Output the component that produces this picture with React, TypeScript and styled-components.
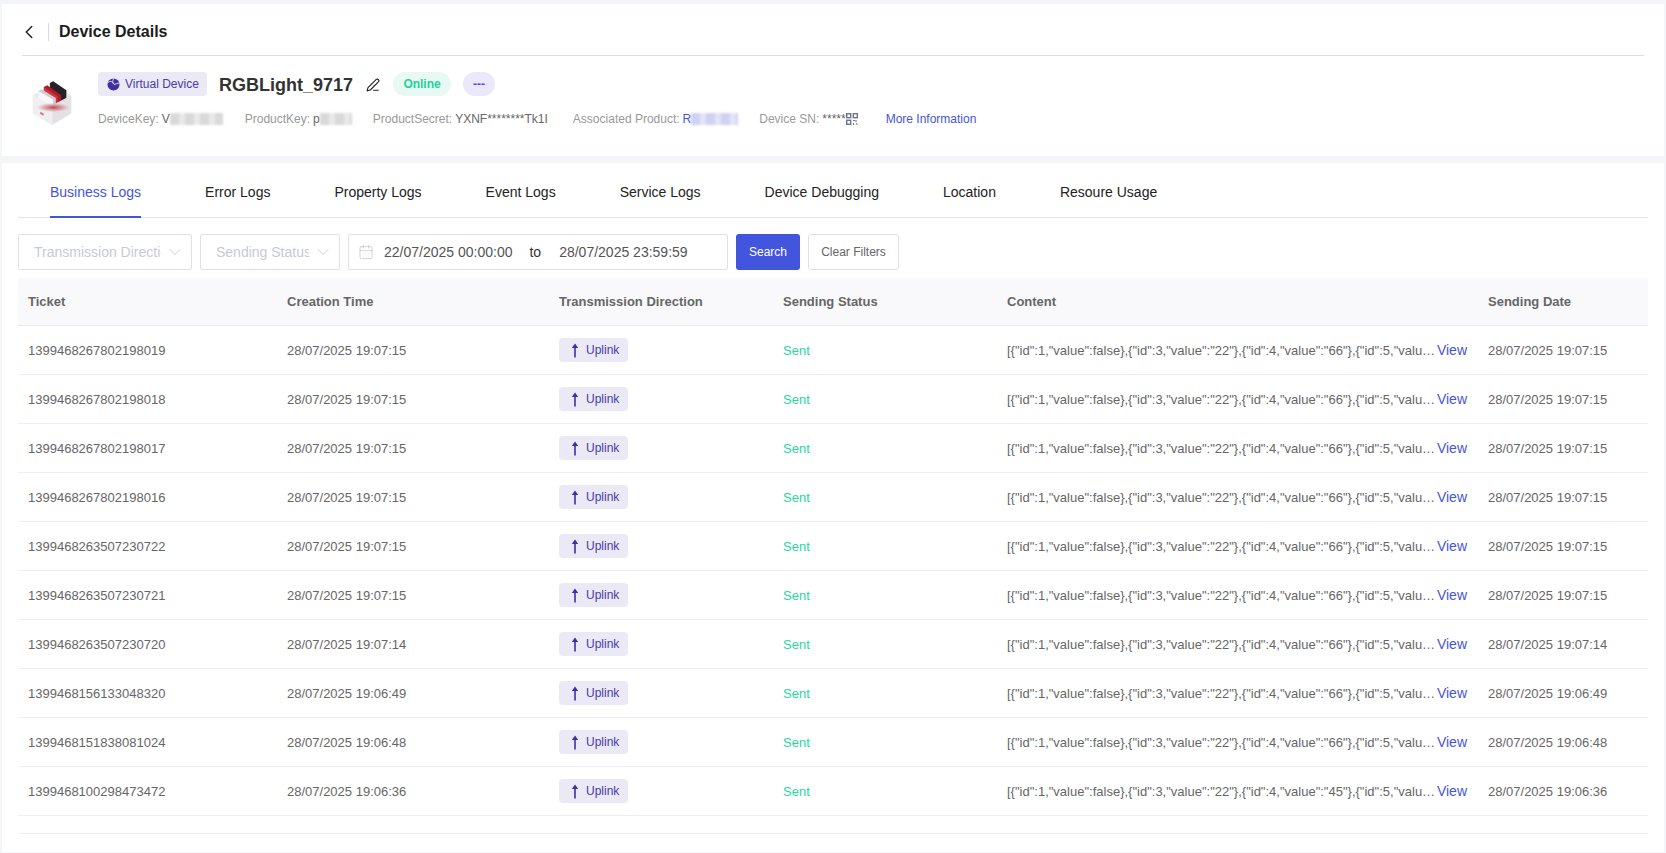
import styled, { createGlobalStyle } from "styled-components";
import { CalendarDays, ChevronDown, ChevronLeft, PenLine } from "lucide-react";

const GlobalStyle = createGlobalStyle`
  html, body {
    margin: 0;
    padding: 0;
    background: #f4f5f9;
    font-family: "Liberation Sans", Arial, sans-serif;
  }
  * {
    box-sizing: border-box;
  }
`;

const Page = styled.div`
  width: 1666px;
  height: 853px;
  padding: 4px 2px 1px;
  display: flex;
  flex-direction: column;
  gap: 7px;
  overflow: hidden;
`;

const HeaderCard = styled.section`
  height: 152px;
  background: #fff;
  padding: 0 20px;
`;

const TitleBar = styled.div`
  height: 52px;
  padding-top: 4px;
  display: flex;
  align-items: center;
  border-bottom: 1px solid #dcdcec;
  color: #1f1f1f;
  svg {
    margin-left: -4px;
  }
`;

const TitleDivider = styled.span`
  width: 1px;
  height: 18px;
  margin: 0 10px 0 8px;
  background: #d6d8ea;
`;

const PageTitle = styled.h1`
  margin: 0;
  font-size: 16px;
  font-weight: 700;
  color: #1c1c1c;
`;

const DeviceRow = styled.div`
  display: flex;
  padding: 16px 0 0 8px;
  gap: 25px;
`;

const DeviceIcon = styled.svg`
  width: 43px;
  height: 47px;
  margin-top: 8px;
  flex: none;
`;

const DeviceInfo = styled.div`
  display: flex;
  flex-direction: column;
  gap: 14px;
`;

const NameRow = styled.div`
  display: flex;
  align-items: center;
  height: 24px;
`;

const KindBadge = styled.span`
  height: 24px;
  width: 109px;
  display: inline-flex;
  align-items: center;
  gap: 5px;
  padding-left: 9px;
  border-radius: 4px;
  background: #ebe9f6;
  color: #4a3aa7;
  font-size: 12px;
`;

const DeviceName = styled.span`
  margin: 2px 0 0 12px;
  font-size: 18px;
  font-weight: 700;
  color: #333;
`;

const EditIcon = styled(PenLine)`
  margin: 2px 0 0 13px;
  color: #222;
`;

const Pill = styled.span<{ $bg: string; $color: string; $width: number }>`
  height: 24px;
  width: ${(p) => p.$width}px;
  margin-left: 12px;
  display: inline-flex;
  align-items: center;
  justify-content: center;
  border-radius: 12px;
  background: ${(p) => p.$bg};
  color: ${(p) => p.$color};
  font-size: 12px;
  font-weight: 700;
`;

const StatusPill = styled(Pill)`
  margin-left: 13px;
`;

const MetaRow = styled.div`
  display: flex;
  align-items: center;
  height: 18px;
  font-size: 12px;
  color: #999;
  white-space: nowrap;
`;

const MetaItem = styled.span<{ $gap?: number }>`
  display: inline-flex;
  align-items: center;
  margin-right: ${(p) => p.$gap ?? 21}px;
`;

const MetaValue = styled.span<{ $color?: string }>`
  margin-left: 3px;
  color: ${(p) => p.$color ?? "#666"};
`;

const Blurred = styled.span<{ $width: number; $tint: string }>`
  display: inline-block;
  width: ${(p) => p.$width}px;
  height: 12px;
  filter: blur(1px);
  opacity: 0.55;
  background: repeating-linear-gradient(
    90deg,
    ${(p) => p.$tint} 0 9px,
    ${(p) => p.$tint}99 9px 15px
  );
`;

const MoreLink = styled.a`
  margin-left: 7px;
  color: #4455dd;
`;

const LogsCard = styled.section`
  flex: 1;
  background: #fff;
  padding: 0 16px;
`;

const Tabs = styled.nav`
  display: flex;
  height: 55px;
  border-bottom: 1px solid #e4e5f1;
`;

const Tab = styled.a<{ $active?: boolean }>`
  display: flex;
  align-items: center;
  height: 55px;
  margin-left: 32px;
  margin-right: 32px;
  padding-top: 4px;
  font-size: 14px;
  color: ${(p) => (p.$active ? "#4455dd" : "#222")};
  border-bottom: 2px solid ${(p) => (p.$active ? "#4455dd" : "transparent")};
`;

const FilterBar = styled.div`
  display: flex;
  gap: 8px;
  margin-top: 16px;
  height: 36px;
`;

const Select = styled.div<{ $width: number }>`
  width: ${(p) => p.$width}px;
  border: 1px solid #dfe0ea;
  border-radius: 2px;
  display: flex;
  align-items: center;
  padding: 0 6px 0 15px;
  font-size: 14px;
  color: #c6cad7;
`;

const SelectLabel = styled.span`
  flex: 1;
  min-width: 0;
  overflow: hidden;
  white-space: nowrap;
  margin-right: 4px;
`;

const DateRange = styled.div`
  width: 380px;
  border: 1px solid #dfe0ea;
  border-radius: 2px;
  display: flex;
  align-items: center;
  padding-left: 9px;
  font-size: 14px;
  color: #555;
  svg {
    margin-right: 10px;
    color: #b9bccb;
  }
`;

const DateTo = styled.span`
  margin: 0 18px 0 17px;
  color: #333;
`;

const SearchButton = styled.button`
  width: 64px;
  border: none;
  border-radius: 3px;
  background: #4455dd;
  color: #fff;
  font: 12px "Liberation Sans", Arial, sans-serif;
`;

const ClearButton = styled.button`
  width: 91px;
  border: 1px solid #dfe0ea;
  border-radius: 3px;
  background: #fff;
  color: #666;
  font: 12px "Liberation Sans", Arial, sans-serif;
`;

const columns = "259px 272px 224px 224px 481px 170px";

const TableHead = styled.div`
  display: grid;
  grid-template-columns: ${columns};
  align-items: center;
  height: 48px;
  margin-top: 8px;
  background: #f9f9fb;
  border-bottom: 1px solid #e9eaf2;
  font-size: 13px;
  font-weight: 700;
  color: #666;
`;

const TableRow = styled.div`
  display: grid;
  grid-template-columns: ${columns};
  align-items: center;
  height: 49px;
  border-bottom: 1px solid #eeeef5;
  font-size: 13px;
  color: #666;
`;

const Cell = styled.div`
  padding: 0 10px;
  min-width: 0;
  white-space: nowrap;
`;

const ContentCell = styled(Cell)`
  display: flex;
  align-items: center;
  padding-right: 11px;
`;

const ContentText = styled.span`
  flex: 1;
  min-width: 0;
  overflow: hidden;
  text-overflow: ellipsis;
`;

const ViewLink = styled.a`
  margin-bottom: 1px;
  flex: none;
  font-size: 14px;
  color: #4455dd;
`;

const DirectionTag = styled.span`
  width: 69px;
  height: 24px;
  display: inline-flex;
  align-items: center;
  gap: 6px;
  padding-left: 11px;
  border-radius: 4px;
  background: #ebe9f6;
  color: #4a3aa7;
  font-size: 12px;
  vertical-align: middle;
`;

const SentText = styled.span`
  color: #2ad6a0;
`;

const TableFooter = styled.div`
  height: 18px;
  border-bottom: 1px solid #eeeef5;
`;

const tabs = [
  "Business Logs",
  "Error Logs",
  "Property Logs",
  "Event Logs",
  "Service Logs",
  "Device Debugging",
  "Location",
  "Resoure Usage",
];

const rows = [
  ["1399468267802198019", "28/07/2025 19:07:15", "66"],
  ["1399468267802198018", "28/07/2025 19:07:15", "66"],
  ["1399468267802198017", "28/07/2025 19:07:15", "66"],
  ["1399468267802198016", "28/07/2025 19:07:15", "66"],
  ["1399468263507230722", "28/07/2025 19:07:15", "66"],
  ["1399468263507230721", "28/07/2025 19:07:15", "66"],
  ["1399468263507230720", "28/07/2025 19:07:14", "66"],
  ["1399468156133048320", "28/07/2025 19:06:49", "66"],
  ["1399468151838081024", "28/07/2025 19:06:48", "66"],
  ["1399468100298473472", "28/07/2025 19:06:36", "45"],
];

function BoxLogo() {
  return (
    <DeviceIcon viewBox="30 60 130 140">
      <defs>
        <radialGradient id="redGlow">
          <stop offset="0" stopColor="#b5202e" stopOpacity="0.8" />
          <stop offset="0.6" stopColor="#c8505a" stopOpacity="0.4" />
          <stop offset="1" stopColor="#d8808a" stopOpacity="0" />
        </radialGradient>
      </defs>
      <polygon points="38,105 97,75 155,105 97,135" fill="#e9e8eb" />
      <polygon points="90,68 100,63 140,90 140,120 130,125 90,100" fill="#262224" />
      <polygon points="72,80 82,75 124,104 124,134 114,138 72,110" fill="#a81d2b" />
      <polygon points="72,80 114,108 114,138 72,110" fill="#d62f40" />
      <polygon points="55,92 65,87 108,113 108,143 100,148 55,122" fill="#cfced3" />
      <polygon points="55,92 100,118 100,148 55,122" fill="#f7f7f9" />
      <polygon points="38,105 97,135 97,195 38,160" fill="#efeef1" />
      <polygon points="155,105 97,135 97,195 155,160" fill="#e3e1e5" />
      <ellipse cx="100" cy="142" rx="50" ry="14" fill="url(#redGlow)" />
      <polygon points="62,155 72,161 70,167 60,161" fill="#d8757e" />
    </DeviceIcon>
  );
}

function GlobeIcon() {
  return (
    <svg width="13" height="13" viewBox="0 0 13 13">
      <circle cx="6.5" cy="6.5" r="6" fill="#3f30a0" />
      <path d="M1 4.500c2.500-2 4-1 5.500 1M6.500.5c-1 2.500-1 4.500.5 6M12 5c-2 .5-3.500 1-5 1.500" stroke="#ebe9f6" strokeWidth="0.9" fill="none" />
    </svg>
  );
}

function QrIcon() {
  return (
    <svg width="12" height="12" viewBox="0 0 12 12" fill="none" stroke="#6e7590" strokeWidth="1.4">
      <rect x="0.7" y="0.7" width="4" height="4" />
      <rect x="7.300" y="0.7" width="4" height="4" />
      <rect x="0.7" y="7.300" width="4" height="4" />
      <path d="M7 7.500h2M10 7v2M7.500 10v2M10 10.500l1.500 1" strokeWidth="1.100" />
    </svg>
  );
}

function UpArrow() {
  return (
    <svg width="10" height="15" viewBox="0 0 10 15">
      <path d="M5 .5 8.200 5H5.800v9.500H4.200V5H1.800z" fill="#3f30a0" />
    </svg>
  );
}

function contentFor(value: string) {
  return `[{"id":1,"value":false},{"id":3,"value":"22"},{"id":4,"value":"${value}"},{"id":5,"value":"100"},{"id":6,"value":"100"}]`;
}

export default function App() {
  return (
    <>
      <GlobalStyle />
      <Page>
        <HeaderCard>
          <TitleBar>
            <ChevronLeft size={22} strokeWidth={1.6} />
            <TitleDivider />
            <PageTitle>Device Details</PageTitle>
          </TitleBar>
          <DeviceRow>
            <BoxLogo />
            <DeviceInfo>
              <NameRow>
                <KindBadge>
                  <GlobeIcon />
                  Virtual Device
                </KindBadge>
                <DeviceName>RGBLight_9717</DeviceName>
                <EditIcon size={14} strokeWidth={1.9} />
                <StatusPill $bg="#e8f8f3" $color="#1fd19a" $width={58}>
                  Online
                </StatusPill>
                <Pill $bg="#ece8fb" $color="#5b3df5" $width={32}>
                  ---
                </Pill>
              </NameRow>
              <MetaRow>
                <MetaItem $gap={22}>
                  DeviceKey:<MetaValue>V</MetaValue>
                  <Blurred $width={53} $tint="#bbbbbb" />
                </MetaItem>
                <MetaItem>
                  ProductKey:<MetaValue>p</MetaValue>
                  <Blurred $width={32} $tint="#bbbbbb" />
                </MetaItem>
                <MetaItem $gap={25}>
                  ProductSecret:<MetaValue>YXNF********Tk1I</MetaValue>
                </MetaItem>
                <MetaItem>
                  Associated Product:<MetaValue $color="#4455dd">R</MetaValue>
                  <Blurred $width={47} $tint="#a9aeea" />
                </MetaItem>
                <MetaItem>
                  Device SN:<MetaValue>*****</MetaValue>
                  <QrIcon />
                </MetaItem>
                <MoreLink>More Information</MoreLink>
              </MetaRow>
            </DeviceInfo>
          </DeviceRow>
        </HeaderCard>
        <LogsCard>
          <Tabs>
            {tabs.map((tab, index) => (
              <Tab key={tab} $active={index === 0}>
                {tab}
              </Tab>
            ))}
          </Tabs>
          <FilterBar>
            <Select $width={174}>
              <SelectLabel>Transmission Direction</SelectLabel>
              <ChevronDown size={20} strokeWidth={1.1} />
            </Select>
            <Select $width={140}>
              <SelectLabel>Sending Status</SelectLabel>
              <ChevronDown size={20} strokeWidth={1.1} />
            </Select>
            <DateRange>
              <CalendarDays size={16} strokeWidth={1} />
              22/07/2025 00:00:00
              <DateTo>to</DateTo>
              28/07/2025 23:59:59
            </DateRange>
            <SearchButton>Search</SearchButton>
            <ClearButton>Clear Filters</ClearButton>
          </FilterBar>
          <TableHead>
            <Cell>Ticket</Cell>
            <Cell>Creation Time</Cell>
            <Cell>Transmission Direction</Cell>
            <Cell>Sending Status</Cell>
            <Cell>Content</Cell>
            <Cell>Sending Date</Cell>
          </TableHead>
          {rows.map(([ticket, time, value]) => (
            <TableRow key={ticket}>
              <Cell>{ticket}</Cell>
              <Cell>{time}</Cell>
              <Cell>
                <DirectionTag>
                  <UpArrow />
                  Uplink
                </DirectionTag>
              </Cell>
              <Cell>
                <SentText>Sent</SentText>
              </Cell>
              <ContentCell>
                <ContentText>{contentFor(value)}</ContentText>
                <ViewLink>View</ViewLink>
              </ContentCell>
              <Cell>{time}</Cell>
            </TableRow>
          ))}
          <TableFooter />
        </LogsCard>
      </Page>
    </>
  );
}
